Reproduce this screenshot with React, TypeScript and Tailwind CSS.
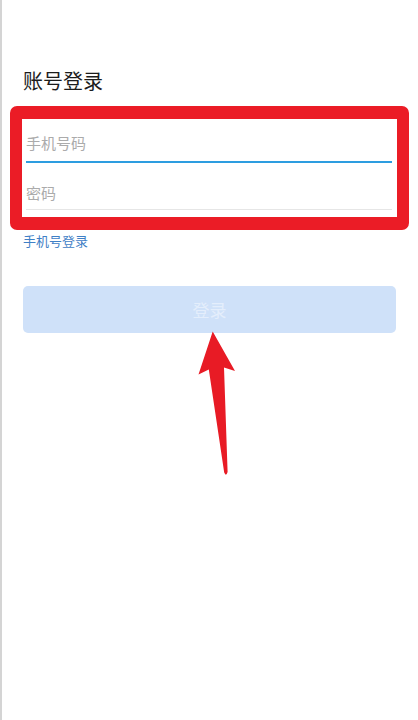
import React from "react";

function Arrow() {
  return (
    <svg
      className="pointer-events-none absolute left-0 top-0"
      width={418}
      height={720}
      viewBox="0 0 418 720"
    >
      <path
        d="M210.7 331.5 L233 371 L222 367.5 L225.6 472 Q224 477 222.2 472.5 L206.8 369.5 L196.5 374.5 Z"
        fill="#e81b25"
      />
    </svg>
  );
}

export default function App() {
  return (
    <div className="relative h-[720px] w-[418px] overflow-hidden border-l-2 border-[#d4d4d4] bg-white font-['Noto_Sans_CJK_SC','Noto_Sans',sans-serif]">
      <h1 className="ml-[21px] mt-[67px] text-[20px] font-normal leading-[28px] text-[#1c1c1c]">
        账号登录
      </h1>

      <div className="ml-[8px] mt-[11px] w-[399px] rounded-[7px] border-[12px] border-t-[13px] border-b-[13px] border-[#eb1c26] bg-white pb-[7px] pl-[4px] pr-[5px]">
        <div className="border-b-2 border-[#2d9de0] pb-[8px] pt-[14px]">
          <input
            className="block w-full text-[15px] leading-[20px] text-[#333] outline-none placeholder:text-[#ababab]"
            placeholder="手机号码"
          />
        </div>
        <div className="border-b border-[#e6e6e6] pb-[6px] pt-[20px]">
          <input
            type="password"
            className="block w-full text-[15px] leading-[20px] text-[#333] outline-none placeholder:text-[#ababab]"
            placeholder="密码"
          />
        </div>
      </div>

      <a className="ml-[21px] mt-[2px] block text-[13px] leading-[18px] text-[#3f80c6]">
        手机号登录
      </a>

      <button className="ml-[21px] mt-[36px] flex h-[47px] w-[373px] items-center justify-center rounded-[5px] bg-[#cfe1f9] text-[17px] text-[#e4eefc]">
        登录
      </button>

      <Arrow />
    </div>
  );
}
